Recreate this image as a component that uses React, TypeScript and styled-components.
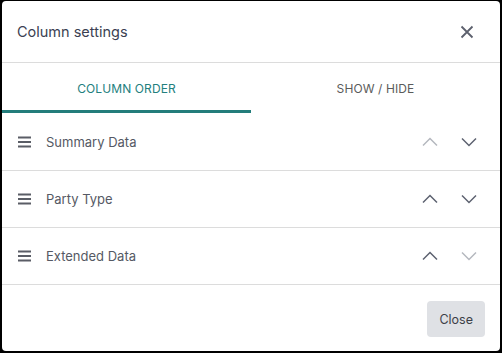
import React, { useState } from 'react';
import styled, { createGlobalStyle } from 'styled-components';

const GlobalStyle = createGlobalStyle`
  html, body {
    margin: 0;
    padding: 0;
    background: #000;
    height: 353px;
    overflow: hidden;
  }
  body {
    padding: 1px 2px 2px 2px;
    box-sizing: border-box;
    font-family: Inter, "Liberation Sans", sans-serif;
  }
`;

const Dialog = styled.div`
  width: 498px;
  height: 350px;
  background: #fff;
  border-radius: 4px;
  display: flex;
  flex-direction: column;
  overflow: hidden;
`;

const Header = styled.div`
  height: 61px;
  border-bottom: 1px solid #dcdcdc;
  display: flex;
  align-items: center;
  justify-content: space-between;
  padding: 0 26px 0 15px;
`;

const Title = styled.h2`
  margin: 0;
  font-size: 14.5px;
  font-weight: 400;
  color: #3b3f52;
`;

const IconButton = styled.button`
  border: none;
  background: none;
  padding: 0;
  display: flex;
  cursor: pointer;
`;

const Tabs = styled.div`
  display: grid;
  grid-template-columns: 1fr 1fr;
  margin-bottom: 1px;
`;

const Tab = styled.button<{ $active?: boolean }>`
  height: 50px;
  border: none;
  background: none;
  padding: 4px 0 0;
  font-family: inherit;
  font-size: 12px;
  letter-spacing: 0.1px;
  color: ${p => (p.$active ? '#23807e' : '#5b5b5b')};
  border-bottom: 3px solid ${p => (p.$active ? '#237d7b' : 'transparent')};
  cursor: pointer;
`;

const List = styled.ul`
  list-style: none;
  margin: 0;
  padding: 0;
`;

const Row = styled.li`
  height: 56px;
  border-bottom: 1px solid #dcdcdc;
  display: flex;
  align-items: center;
  padding: 0 22px 0 15px;
`;

const Label = styled.span`
  flex: 1;
  margin-left: 14px;
  font-size: 13px;
  color: #555964;
`;

const Arrows = styled.div`
  display: flex;
  gap: 21px;
`;

const ArrowButton = styled.button<{ $disabled?: boolean }>`
  border: none;
  background: none;
  padding: 0;
  display: flex;
  color: ${p => (p.$disabled ? '#b5b8bf' : '#5d6270')};
  cursor: ${p => (p.$disabled ? 'default' : 'pointer')};
`;

const Footer = styled.div`
  flex: 1;
  display: flex;
  align-items: center;
  justify-content: flex-end;
  padding: 2px 15px 0;
`;

const CloseButton = styled.button`
  height: 36px;
  padding: 0 12px;
  border: none;
  border-radius: 4px;
  background: #dfe1e5;
  color: #3c3f48;
  font-family: inherit;
  font-size: 12.5px;
  cursor: pointer;
`;

const DragIcon = () => (
  <svg width="15" height="14" viewBox="0 0 15 14">
    <path d="M1 2.5h13M1 7h13M1 11.5h13" stroke="#5a5d66" strokeWidth="1.8" />
  </svg>
);

const Chevron = ({ up }: { up?: boolean }) => (
  <svg width="18" height="18" viewBox="0 0 18 18">
    <polyline
      points={up ? '2,12.5 9,5.5 16,12.5' : '2,5.5 9,12.5 16,5.5'}
      fill="none"
      stroke="currentColor"
      strokeWidth="1.5"
    />
  </svg>
);

const columns = ['Summary Data', 'Party Type', 'Extended Data'];

export default function App() {
  const [tab, setTab] = useState(0);
  const [items, setItems] = useState(columns);

  const move = (i: number, d: number) => {
    const j = i + d;
    if (j < 0 || j >= items.length) return;
    const next = [...items];
    [next[i], next[j]] = [next[j], next[i]];
    setItems(next);
  };

  return (
    <>
      <GlobalStyle />
      <Dialog>
        <Header>
          <Title>Column settings</Title>
          <IconButton>
            <svg width="14" height="14" viewBox="0 0 14 14">
              <path d="M1.5 1.5l11 11M12.5 1.5l-11 11" stroke="#5c606d" strokeWidth="1.8" />
            </svg>
          </IconButton>
        </Header>
        <Tabs>
          <Tab $active={tab === 0} onClick={() => setTab(0)}>COLUMN ORDER</Tab>
          <Tab $active={tab === 1} onClick={() => setTab(1)}>SHOW / HIDE</Tab>
        </Tabs>
        <List>
          {items.map((name, i) => (
            <Row key={name}>
              <DragIcon />
              <Label>{name}</Label>
              <Arrows>
                <ArrowButton $disabled={i === 0} onClick={() => move(i, -1)}>
                  <Chevron up />
                </ArrowButton>
                <ArrowButton $disabled={i === items.length - 1} onClick={() => move(i, 1)}>
                  <Chevron />
                </ArrowButton>
              </Arrows>
            </Row>
          ))}
        </List>
        <Footer>
          <CloseButton>Close</CloseButton>
        </Footer>
      </Dialog>
    </>
  );
}
